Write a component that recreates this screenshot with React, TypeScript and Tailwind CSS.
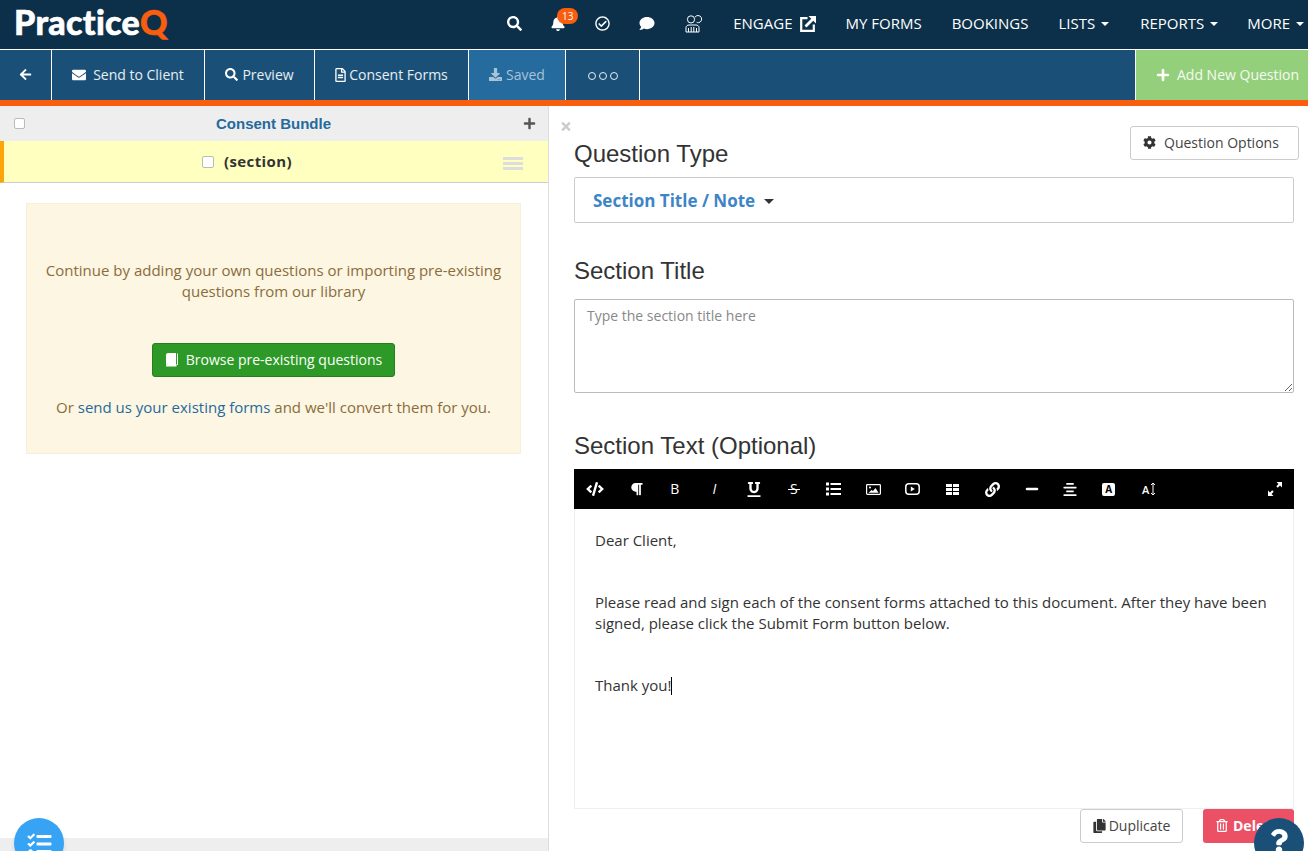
import React from 'react';
import {
  FaAlignCenter,
  FaArrowLeft,
  FaBell,
  FaCog,
  FaCode,
  FaComment,
  FaCopy,
  FaDownload,
  FaEnvelope,
  FaLink,
  FaMinus,
  FaParagraph,
  FaPlus,
  FaQuestion,
  FaRegCheckCircle,
  FaRegFileAlt,
  FaRegTrashAlt,
  FaSearch,
  FaTasks,
  FaTimes,
  FaUnderline,
} from 'react-icons/fa';

const Caret = ({ className = '' }: { className?: string }) => (
  <span className={`inline-block w-0 h-0 border-x-[4px] border-x-transparent border-t-[4px] border-t-current ${className}`} />
);

const EngageIcon = () => (
  <svg width="16" height="16" viewBox="0 0 16 16" fill="none" stroke="white">
    <path d="M7.5 2.2H1.2v12.6h12.6V8.5" strokeWidth="2.2" />
    <path d="M5.5 10.5 14 2" strokeWidth="2.8" />
    <path d="M8.5 0h7.5v7.5z" fill="white" stroke="none" />
  </svg>
);

const PeopleIcon = () => (
  <svg width="20" height="18" viewBox="0 0 20 18" fill="none" stroke="white" strokeWidth="1">
    <circle cx="6" cy="4.4" r="3.6" />
    <path d="M10 2.2a3.6 3.6 0 1 1 3.4 5.5c-.6 0-1.2-.2-1.7-.4" />
    <path d="M1 17v-4.5C1 11 2.5 10 4 10h7c1.5 0 3 1 3 2.5V17" />
    <path d="M3.5 17v-4M6.2 17v-5M8.8 17v-5M11.5 17v-4M1 17h13" />
  </svg>
);

const BookIcon = () => (
  <svg width="14" height="15" viewBox="0 0 14 15">
    <path d="M1 3.2C1 1.8 2 1 3.2 1H11v11H3.2C2 12 1 12.800 1 14z" fill="white" />
    <path d="M1 14c0-1 1-2 2-2h8.500v2.500H2.500C1.500 14.500 1 14.500 1 14z" fill="white" />
    <path d="M12.500 1.500V13" stroke="white" strokeWidth="1" fill="none" />
  </svg>
);

const ListIcon = () => (
  <svg width="15" height="14" viewBox="0 0 15 14" fill="white">
    <rect x="0" y="0.500" width="3" height="3" />
    <rect x="0" y="5.500" width="3" height="3" />
    <rect x="0" y="10.500" width="3" height="3" />
    <rect x="4.500" y="1" width="10.500" height="2" />
    <rect x="4.500" y="6" width="10.500" height="2" />
    <rect x="4.500" y="11" width="10.500" height="2" />
  </svg>
);

const ImageIcon = () => (
  <svg width="15" height="11" viewBox="0 0 15 11">
    <rect x="0.600" y="0.600" width="13.800" height="9.800" rx="0.800" fill="none" stroke="white" strokeWidth="1.200" />
    <circle cx="4" cy="3.600" r="1" fill="white" />
    <path d="M2.500 8.800 5.500 6l1.500 1 2.500-3 3 4.800z" fill="white" />
  </svg>
);

const VideoIcon = () => (
  <svg width="15" height="12" viewBox="0 0 15 12">
    <rect x="0.800" y="0.800" width="13.400" height="10.400" rx="3" fill="none" stroke="white" strokeWidth="1.500" />
    <path d="M5.800 3.400 9.800 6l-4 2.600z" fill="white" />
  </svg>
);

const TableIcon = () => (
  <svg width="13" height="11" viewBox="0 0 13 11" fill="white">
    <rect x="0" y="0" width="6" height="3" />
    <rect x="7" y="0" width="6" height="3" />
    <rect x="0" y="4" width="6" height="3" />
    <rect x="7" y="4" width="6" height="3" />
    <rect x="0" y="8" width="6" height="3" />
    <rect x="7" y="8" width="6" height="3" />
  </svg>
);

const UpDownIcon = () => (
  <svg width="6" height="14" viewBox="0 0 6 14" fill="none" stroke="white" strokeWidth="1">
    <path d="M3 1v12M1 3l2-2 2 2M1 11l2 2 2-2" />
  </svg>
);

const ExpandIcon = () => (
  <svg width="14" height="14" viewBox="0 0 14 14" fill="white">
    <path d="M8.500 0H14v5.500l-2-2L9.800 5.700 8.300 4.200 10.500 2z" />
    <path d="M5.500 14H0V8.500l2 2 2.200-2.200 1.500 1.500L3.500 12z" />
  </svg>
);

const TopNav = () => (
  <nav className="h-[49px] bg-[#0c3049] flex items-center text-white text-[15px] pb-[2px]">
    <div className="pl-[14px] mb-[3px] font-['Lato',sans-serif] font-black text-[34px] leading-none tracking-[0.3px] [-webkit-text-stroke:0.6px]">
      Practice<span className="text-[#f95d0e]">Q</span>
    </div>
    <div className="ml-auto flex items-center pr-[4px]">
      <FaSearch className="w-[15px] h-[15px]" />
      <div className="relative ml-[29px]">
        <FaBell className="w-[14px] h-[15px]" />
        <span className="absolute -top-[8px] left-[6px] w-[21px] h-[16px] rounded-full bg-[#f95d0e] text-[10px] leading-[16px] text-center">13</span>
      </div>
      <FaRegCheckCircle className="w-[15px] h-[15px] ml-[30px]" />
      <FaComment className="w-[16px] h-[15px] ml-[29px]" />
      <span className="ml-[30px]"><PeopleIcon /></span>
      <span className="ml-[28px] flex items-center gap-[8px]">ENGAGE <EngageIcon /></span>
      <span className="ml-[29px]">MY FORMS</span>
      <span className="ml-[30px]">BOOKINGS</span>
      <span className="ml-[30px] flex items-center gap-[6px]">LISTS <Caret /></span>
      <span className="ml-[31px] flex items-center gap-[6px]">REPORTS <Caret /></span>
      <span className="ml-[29px] flex items-center gap-[6px]">MORE <Caret /></span>
    </div>
  </nav>
);

const ToolItem = ({ w, children, className = '' }: { w: string; children: React.ReactNode; className?: string }) => (
  <div className={`${w} h-full flex items-center justify-center border-r border-white shrink-0 pb-[1px] ${className}`}>{children}</div>
);

const ToolBar = () => (
  <div className="h-[51px] bg-[#1a5078] border-t border-white flex text-white/90 text-[14px]">
    <ToolItem w="w-[52px]"><FaArrowLeft className="w-[13px] h-[13px] text-white" /></ToolItem>
    <ToolItem w="w-[153px]"><FaEnvelope className="w-[14px] h-[14px] mr-[7px] text-white" />Send to Client</ToolItem>
    <ToolItem w="w-[110px]"><FaSearch className="w-[13px] h-[13px] mr-[4px] text-white" />Preview</ToolItem>
    <ToolItem w="w-[154px]"><FaRegFileAlt className="w-[11px] h-[14px] mr-[3px] text-white" />Consent Forms</ToolItem>
    <ToolItem w="w-[97px]" className="bg-[#256b9e] text-white/60"><FaDownload className="w-[13px] h-[13px] mr-[4px]" />Saved</ToolItem>
    <ToolItem w="w-[74px]">
      <span className="flex gap-[3px] pt-[3px]">
        <span className="w-[8px] h-[8px] rounded-full border border-white/90" />
        <span className="w-[8px] h-[8px] rounded-full border border-white/90" />
        <span className="w-[8px] h-[8px] rounded-full border border-white/90" />
      </span>
    </ToolItem>
    <div className="ml-auto w-[173px] h-full bg-[#94cf7b] border-l border-white flex items-center pl-[20px] pb-[1px]">
      <FaPlus className="w-[14px] h-[14px] mr-[7px] text-white" />Add New Question
    </div>
  </div>
);

const LeftPanel = () => (
  <aside className="w-[549px] shrink-0 border-r border-[#ddd] flex flex-col">
    <div className="h-[35px] bg-[#eee] relative flex items-center justify-center">
      <span className="absolute left-[14px] w-[11px] h-[11px] bg-white border border-[#bbb] rounded-[2px]" />
      <span className="font-['Liberation_Sans',sans-serif] font-bold text-[15px] text-[#246a9c] pt-[1px] pr-[1px]">Consent Bundle</span>
      <FaPlus className="absolute right-[12px] w-[13px] h-[13px] text-[#555]" />
    </div>
    <div className="h-[42px] bg-[#ffffc0] border-l-[4px] border-l-[#fca50a] border-b border-b-[#ccc] relative flex items-center justify-center pr-[58px]">
      <span className="w-[12px] h-[12px] bg-white border border-[#bbb] rounded-[2px] mr-[10px]" />
      <span className="font-bold text-[15px] text-[#333] tracking-[0.4px]">(section)</span>
      <div className="absolute right-[25px] top-[16px] w-[20px] flex flex-col gap-[2px]">
        <span className="h-[3px] bg-[#ddd]" />
        <span className="h-[3px] bg-[#ddd]" />
        <span className="h-[3px] bg-[#ddd]" />
      </div>
    </div>
    <div className="flex-1 flex flex-col">
      <div className="mt-[20px] ml-[26px] w-[495px] h-[251px] bg-[#fcf6e3] border border-[#f8efd8] text-[#8a6d3b] text-[15px] leading-[21px] text-center flex flex-col items-center pt-[56px] px-[14px]">
        <p>Continue by adding your own questions or importing pre-existing questions from our library</p>
        <button className="mt-[41px] h-[34px] w-[243px] rounded-[3px] bg-[#2d9a28] border border-[#26801f] text-white text-[14px] flex items-center justify-center pb-[1px]">
          <BookIcon /><span className="ml-[7px]">Browse pre-existing questions</span>
        </button>
        <p className="mt-[20px]">Or <span className="text-[#246a9c]">send us your existing forms</span> and we'll convert them for you.</p>
      </div>
      <div className="mt-auto h-[13px] bg-[#eee]" />
    </div>
  </aside>
);

const EditorBar = () => (
  <div className="h-[40px] bg-black text-white relative flex items-center pl-[1.500px]">
    <span className="w-[39.700px] flex justify-center"><FaCode className="w-[18px] h-[14px]" /></span>
    <span className="w-[39.700px] flex justify-center pl-[2px]"><FaParagraph className="w-[13px] h-[14px]" /></span>
    <span className="w-[39.700px] flex justify-center text-[14px] leading-none font-medium">B</span>
    <span className="w-[39.700px] flex justify-center text-[14px] leading-none italic">I</span>
    <span className="w-[39.700px] flex justify-center"><FaUnderline className="w-[14px] h-[15px]" /></span>
    <span className="w-[39.700px] flex justify-center text-[14px] leading-none">
      <span className="relative">
        S
        <span className="absolute -left-[2px] -right-[2px] top-[7px] h-px bg-white" />
      </span>
    </span>
    <span className="w-[39.700px] flex justify-center"><ListIcon /></span>
    <span className="w-[39.700px] flex justify-center"><ImageIcon /></span>
    <span className="w-[39.700px] flex justify-center"><VideoIcon /></span>
    <span className="w-[39.700px] flex justify-center"><TableIcon /></span>
    <span className="w-[39.700px] flex justify-center"><FaLink className="w-[15px] h-[15px]" /></span>
    <span className="w-[39.700px] flex justify-center"><FaMinus className="w-[14px] h-[14px]" /></span>
    <span className="w-[36px] flex justify-center"><FaAlignCenter className="w-[14px] h-[15px]" /></span>
    <span className="w-[42px] flex justify-center"><span className="w-[13px] h-[13px] bg-white rounded-[2px] text-black text-[10px] font-bold leading-[13px] text-center">A</span></span>
    <span className="w-[39px] flex justify-center items-center gap-[1px] text-[11px] leading-none font-semibold">A<UpDownIcon /></span>
    <span className="absolute right-[12px] top-[13px]"><ExpandIcon /></span>
  </div>
);

const RightPanel = () => (
  <main className="flex-1 relative pl-[25px] pr-[14px] min-w-0">
    <FaTimes className="absolute left-[11px] top-[14px] w-[12px] h-[13px] text-[#ccc]" />
    <button className="absolute right-[9px] top-[20px] w-[169px] h-[34px] bg-white border border-[#ccc] rounded-[3px] text-[14px] text-[#444] flex items-center pl-[12px] pb-[1px]">
      <FaCog className="w-[13px] h-[13px] mr-[8px] text-[#333]" />Question Options
    </button>
    <h2 className="pt-[33px] font-['Liberation_Sans',sans-serif] text-[24px] leading-[30px] text-[#333]">Question Type</h2>
    <div className="mt-[8px] h-[46px] border border-[#ccc] rounded-[2px] flex items-center pl-[18px] pt-[2px] text-[#3d85c6] font-bold text-[17px]">
      Section Title / Note <Caret className="ml-[9px] border-x-[5px] border-t-[5px] text-[#333]" />
    </div>
    <h2 className="mt-[33px] font-['Liberation_Sans',sans-serif] text-[24px] leading-[30px] text-[#333]">Section Title</h2>
    <textarea
      readOnly
      placeholder="Type the section title here"
      className="mt-[13px] block w-full h-[94px] border border-[#bbb] rounded-[2px] px-[12px] py-[6px] text-[14px] leading-[20px] placeholder:text-[#888] outline-none"
    />
    <h2 className="mt-[38px] font-['Liberation_Sans',sans-serif] text-[24px] leading-[30px] text-[#333]">Section Text (Optional)</h2>
    <div className="mt-[8px]">
      <EditorBar />
      <div className="h-[300px] border border-t-0 border-[#eee] px-[20px] pt-[21px] text-[15px] leading-[21px] text-[#333]">
        <p>Dear Client,</p>
        <p className="mt-[41px]">Please read and sign each of the consent forms attached to this document. After they have been signed, please click the Submit Form button below.</p>
        <p className="mt-[41px]">Thank you!<span className="inline-block w-px h-[18px] bg-black align-text-bottom" /></p>
      </div>
    </div>
    <div className="flex justify-end gap-[20px] text-[14px]">
      <button className="w-[103px] h-[34px] bg-white border border-[#ccc] rounded-[3px] text-[#444] flex items-center justify-center pb-[1px]">
        <FaCopy className="w-[13px] h-[14px] mr-[3px] text-[#333]" />Duplicate
      </button>
      <button className="w-[91px] h-[34px] bg-[#ec5064] rounded-[3px] text-white font-bold flex items-center pl-[13px] pb-[1px]">
        <FaRegTrashAlt className="w-[12px] h-[13px] mr-[5px]" />Delete
      </button>
    </div>
  </main>
);

export default function App() {
  return (
    <div className="h-[851px] w-[1308px] overflow-hidden relative bg-white font-['Open_Sans',sans-serif] flex flex-col">
      <TopNav />
      <ToolBar />
      <div className="h-[6px] bg-[#f95d0e]" />
      <div className="flex-1 flex min-h-0">
        <LeftPanel />
        <RightPanel />
      </div>
      <div className="absolute left-[14px] top-[818px] w-[50px] h-[50px] rounded-full bg-[#36a3f5] shadow-md flex items-start justify-center pt-[14px] text-white">
        <FaTasks className="w-[27px] h-[24px]" />
      </div>
      <div className="absolute left-[1254px] top-[818px] w-[50px] h-[50px] rounded-full bg-[#1a5078] flex items-start justify-center pt-[11px] text-white">
        <FaQuestion className="w-[20px] h-[24px]" />
      </div>
    </div>
  );
}
